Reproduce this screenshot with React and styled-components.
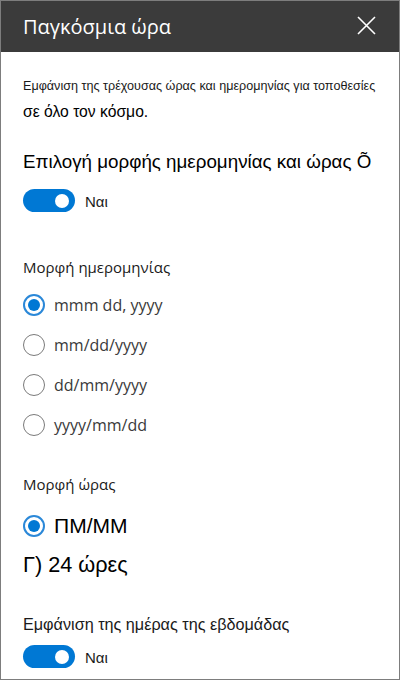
import React, { useState } from "react";
import styled, { createGlobalStyle } from "styled-components";

const GlobalStyle = createGlobalStyle`
	html, body {
		margin: 0;
		padding: 0;
		background: #ffffff;
	}
	* {
		box-sizing: border-box;
	}
`;

const StyledPanel = styled.div`
	width: 400px;
	height: 680px;
	border: 1px solid #7d7d7d;
	background: #ffffff;
	overflow: hidden;
`;

const StyledHeader = styled.header`
	display: flex;
	align-items: center;
	justify-content: space-between;
	height: 51px;
	padding: 0 22px 0 22px;
	background: #3b3b3b;
`;

const StyledTitle = styled.h1`
	margin: 0;
	font-family: "Open Sans", "Noto Sans", sans-serif;
	font-weight: 400;
	font-size: 20px;
	line-height: 28px;
	color: #ffffff;
`;

const StyledCloseBtn = styled.button`
	display: flex;
	align-items: center;
	justify-content: center;
	width: 22px;
	height: 22px;
	margin-top: -2px;
	padding: 0;
	border: none;
	background: transparent;
	cursor: pointer;
`;

const StyledBody = styled.div`
	padding: 0 22px;
`;

const StyledDesc = styled.p`
	margin: 25px 0 0;
	font-family: "Liberation Sans", Arial, sans-serif;
	color: #1a1a1a;
`;

const StyledDescLine = styled.span`
	display: block;
	margin-top: ${(p) => (p.$big ? "6px" : "0")};
	font-size: ${(p) => (p.$big ? "15.7px" : "12.6px")};
	line-height: ${(p) => (p.$big ? "22px" : "18px")};
	color: ${(p) => (p.$big ? "#000" : "#1a1a1a")};
	white-space: nowrap;
`;

const StyledHeading = styled.h2`
	margin: 27px 0 0;
	font-family: "Liberation Sans", Arial, sans-serif;
	font-weight: 400;
	font-size: 18.8px;
	line-height: 24px;
	color: #000000;
	white-space: nowrap;
`;

const StyledToggleRow = styled.label`
	display: flex;
	align-items: center;
	gap: 10px;
	margin-top: ${(p) => p.$top || "0"};
	cursor: pointer;
`;

const StyledTrack = styled.span`
	position: relative;
	display: block;
	width: 52px;
	height: 23px;
	border-radius: 12px;
	background: ${(p) => (p.$on ? "#0078d4" : "#ffffff")};
	border: ${(p) => (p.$on ? "none" : "1px solid #333")};
`;

const StyledKnob = styled.span`
	position: absolute;
	top: 4.5px;
	left: ${(p) => (p.$on ? "32px" : "6px")};
	width: 14px;
	height: 14px;
	border-radius: 50%;
	background: ${(p) => (p.$on ? "#ffffff" : "#333")};
`;

const StyledToggleText = styled.span`
	font-family: "Liberation Sans", Arial, sans-serif;
	font-size: 15px;
	line-height: 22px;
	margin-top: 3px;
	color: #1a1a1a;
`;

const StyledLabel = styled.p`
	margin: ${(p) => p.$top || "0"} 0 0;
	font-family: ${(p) =>
		p.$arial
			? `"Liberation Sans", Arial, sans-serif`
			: `"Open Sans", "Noto Sans", sans-serif`};
	font-size: ${(p) => p.$size || "15px"};
	line-height: 22px;
	color: #1a1a1a;
`;

const StyledRadioList = styled.div`
	display: flex;
	flex-direction: column;
	margin-top: ${(p) => p.$top || "0"};
`;

const StyledRadioRow = styled.label`
	display: flex;
	align-items: center;
	gap: 9px;
	height: 40px;
	cursor: pointer;
`;

const StyledRadioCircle = styled.span`
	display: flex;
	align-items: center;
	justify-content: center;
	flex: 0 0 auto;
	width: 22px;
	height: 22px;
	border-radius: 50%;
	border: ${(p) => (p.$checked ? "2px solid #2b88d8" : "1.5px solid #7a7a7a")};
	background: #ffffff;
	&::after {
		content: "";
		display: ${(p) => (p.$checked ? "block" : "none")};
		width: 12px;
		height: 12px;
		border-radius: 50%;
		background: #0078d4;
	}
`;

const StyledRadioText = styled.span`
	font-family: ${(p) =>
		p.$big
			? `"Liberation Sans", Arial, sans-serif`
			: `"Open Sans", "Noto Sans", sans-serif`};
	font-size: ${(p) => (p.$big ? "21px" : "16px")};
	line-height: 24px;
	color: ${(p) => (p.$big ? "#000000" : "#3a3a3a")};
`;

const StyledBigLine = styled.p`
	margin: 5px 0 0;
	font-family: "Liberation Sans", Arial, sans-serif;
	font-size: 21.7px;
	line-height: 28px;
	color: #000000;
`;

const dateFormats = ["mmm dd, yyyy", "mm/dd/yyyy", "dd/mm/yyyy", "yyyy/mm/dd"];

const Toggle = ({ on, onChange, top }) => (
	<StyledToggleRow $top={top} onClick={onChange}>
		<StyledTrack $on={on}>
			<StyledKnob $on={on} />
		</StyledTrack>
		<StyledToggleText>{on ? "Ναι" : "Όχι"}</StyledToggleText>
	</StyledToggleRow>
);

export default function App() {
	const [pickFormat, setPickFormat] = useState(true);
	const [showDay, setShowDay] = useState(true);
	const [dateFmt, setDateFmt] = useState(0);

	return (
		<>
			<GlobalStyle />
			<StyledPanel>
				<StyledHeader>
					<StyledTitle>Παγκόσμια ώρα</StyledTitle>
					<StyledCloseBtn aria-label="Κλείσιμο">
						<svg width="19" height="19" viewBox="0 0 19 19">
							<path
								d="M1 1 L18 18 M18 1 L1 18"
								stroke="#ffffff"
								strokeWidth="1.6"
								fill="none"
							/>
						</svg>
					</StyledCloseBtn>
				</StyledHeader>
				<StyledBody>
					<StyledDesc>
						<StyledDescLine>
							Εμφάνιση της τρέχουσας ώρας και ημερομηνίας για τοποθεσίες
						</StyledDescLine>
						<StyledDescLine $big>σε όλο τον κόσμο.</StyledDescLine>
					</StyledDesc>
					<StyledHeading>Επιλογή μορφής ημερομηνίας και ώρας Õ</StyledHeading>
					<Toggle
						top="14px"
						on={pickFormat}
						onChange={() => setPickFormat(!pickFormat)}
					/>

					<StyledLabel $top="43px">Μορφή ημερομηνίας</StyledLabel>
					<StyledRadioList $top="7px">
						{dateFormats.map((f, i) => (
							<StyledRadioRow key={f} onClick={() => setDateFmt(i)}>
								<StyledRadioCircle $checked={dateFmt === i} />
								<StyledRadioText>{f}</StyledRadioText>
							</StyledRadioRow>
						))}
					</StyledRadioList>

					<StyledLabel $top="28px">Μορφή ώρας</StyledLabel>
					<StyledRadioList $top="11px">
						<StyledRadioRow>
							<StyledRadioCircle $checked />
							<StyledRadioText $big>ΠΜ/ΜΜ</StyledRadioText>
						</StyledRadioRow>
					</StyledRadioList>
					<StyledBigLine>Γ) 24 ώρες</StyledBigLine>

					<StyledLabel $top="34px" $arial $size="16.2px">
						Εμφάνιση της ημέρας της εβδομάδας
					</StyledLabel>
					<Toggle top="9px" on={showDay} onChange={() => setShowDay(!showDay)} />
				</StyledBody>
			</StyledPanel>
		</>
	);
}
